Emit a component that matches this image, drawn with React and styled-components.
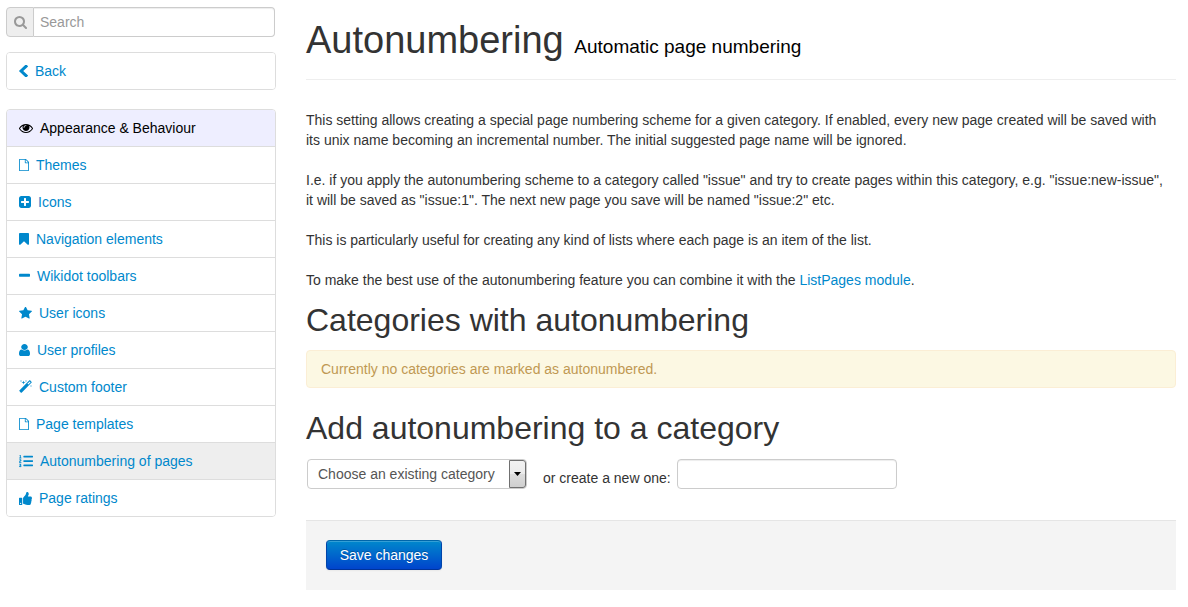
import React from "react";
import styled, { createGlobalStyle } from "styled-components";
import { FaListOl, FaThumbsUp } from "react-icons/fa";

const GlobalStyle = createGlobalStyle`
  *, *::before, *::after { box-sizing: border-box; }
  body {
    margin: 0;
    background: #fff;
    color: #333;
    font: 14px/20px "Liberation Sans", Arial, sans-serif;
  }
  a { color: #08c; text-decoration: none; }
  input, select, button { font: inherit; }
`;

const Page = styled.div`
  display: flex;
  gap: 30px;
  padding: 7px 12px 17px 6px;
`;

const Sidebar = styled.aside`
  flex: none;
  width: 270px;
`;

const SearchBox = styled.label`
  display: flex;
  height: 30px;
  margin: 0 1px 15px 0;
`;

const SearchAddon = styled.span`
  display: flex;
  align-items: center;
  justify-content: center;
  width: 28px;
  border: 1px solid #ccc;
  border-radius: 4px 0 0 4px;
  background: #eee;
  color: #999;
`;

const TextInput = styled.input`
  height: 30px;
  padding: 4px 6px;
  border: 1px solid #ccc;
  border-radius: 4px;
  background: #fff;
  color: #555;
  box-shadow: inset 0 1px 1px rgba(0, 0, 0, 0.075);
  &::placeholder { color: #999; }
`;

const SearchInput = styled(TextInput)`
  flex: 1;
  min-width: 0;
  border-left: 0;
  border-radius: 0 4px 4px 0;
`;

const NavList = styled.ul`
  list-style: none;
  margin: 0 0 19px;
  padding: 0;
  border: 1px solid #ddd;
  border-radius: 4px;
  overflow: hidden;
`;

const NavItem = styled.li`
  & + & { border-top: 1px solid #ddd; }
`;

const NavLink = styled.a`
  display: flex;
  align-items: center;
  gap: 7px;
  padding: 8px 12px;
  background: ${(p) => (p.$kind === "header" ? "#eef" : p.$kind === "active" ? "#eee" : "#fff")};
  && { color: ${(p) => (p.$kind === "header" ? "#000" : "#08c")}; }
`;

const Glyph = styled.svg`
  flex: none;
  display: block;
  fill: currentColor;
`;

const Main = styled.main`
  flex: 1;
  min-width: 0;
  padding-top: 13px;
`;

const PageHeader = styled.header`
  padding-bottom: 19px;
  margin-bottom: 30px;
  border-bottom: 1px solid #eee;
`;

const Title = styled.h1`
  margin: 0;
  font-size: 38px;
  line-height: 40px;
  font-weight: 400;
  small {
    font-size: 19px;
    line-height: 20px;
    color: #000;
  }
`;

const Paragraph = styled.p`
  margin: 0 0 20px;
`;

const SectionTitle = styled.h2`
  margin: ${(p) => (p.$first ? "10px" : "20px")} 0 10px;
  font-size: 32px;
  line-height: 40px;
  font-weight: 400;
`;

const Intro = styled.div`
  padding-right: 8px;
  p:last-child { margin-bottom: 10px; }
`;

const Alert = styled.div`
  padding: 8px 14px;
  border: 1px solid #fbeed5;
  border-radius: 4px;
  background: #fcf8e3;
  color: #c09853;
`;

const CategoryRow = styled.div`
  display: flex;
  align-items: flex-end;
  padding: 1px;
`;

const SelectWrap = styled.span`
  position: relative;
  display: block;
  width: 220px;
`;

const Select = styled.select`
  appearance: none;
  display: block;
  width: 100%;
  height: 30px;
  padding: 4px 20px 4px 10px;
  border: 1px solid #ccc;
  border-radius: 4px;
  background: #fff;
  color: #555;
`;

const SelectArrow = styled.span`
  position: absolute;
  top: 1px;
  right: 1px;
  bottom: 1px;
  width: 17px;
  display: flex;
  align-items: center;
  justify-content: center;
  border: 1px solid #707070;
  border-radius: 0 3px 3px 0;
  background: linear-gradient(#f2f2f2, #ebebeb 50%, #ddd 50%, #cfcfcf);
  color: #000;
  pointer-events: none;
`;

const NewLabel = styled.label`
  margin: 0 6px 0 16px;
  line-height: 22px;
`;

const NewInput = styled(TextInput)`
  width: 220px;
`;

const Actions = styled.div`
  margin-top: 30px;
  padding: 19px 20px 20px;
  border-top: 1px solid #e5e5e5;
  background: #f4f4f4;
`;

const PrimaryButton = styled.button`
  display: block;
  min-width: 116px;
  height: 30px;
  padding: 4px 12px;
  border: 1px solid;
  border-color: #06a #04a #039;
  border-radius: 4px;
  background: linear-gradient(#08c, #04c);
  color: #fff;
  text-shadow: 0 -1px 0 rgba(0, 0, 0, 0.25);
  box-shadow: inset 0 1px 0 rgba(255, 255, 255, 0.2), 0 1px 2px rgba(0, 0, 0, 0.05);
`;

/* Each glyph: [view box, drawn width, drawn height, path]. */
const glyphs = {
  search: ["64 128 1664 1664", 13, 13, "M1216 832q0-185-131.5-316.5t-316.5-131.5-316.5 131.5-131.5 316.5 131.5 316.5 316.5 131.5 316.5-131.5 131.5-316.5zm512 832q0 52-38 90t-90 38q-54 0-90-38l-343-342q-179 124-399 124-143 0-273.5-55.5t-225-150-150-225-55.5-273.5 55.5-273.5 150-225 225-150 273.5-55.5 273.5 55.5 225 150 150 225 55.5 273.5q0 220-124 399l343 343q37 37 37 90z"],
  back: ["410 90 1036 1484", 9, 12, "M1427 301l-531 531 531 531q19 19 19 45t-19 45l-166 166q-19 19-45 19t-45-19l-742-742q-19-19-19-45t19-45l742-742q19-19 45-19t45 19l166 166q19 19 19 45t-19 45z"],
  eye: ["0 0 1792 1792", 14, 14, "M1664 960q-152-236-381-353 61 104 61 225 0 185-131.5 316.5t-316.5 131.5-316.5-131.5-131.5-316.5q0-121 61-225-229 117-381 353 133 205 333.5 326.5t434.5 121.5 434.5-121.5 333.5-326.5zm-720-384q0-20-14-34t-34-14q-125 0-214.5 89.5t-89.5 214.5q0 20 14 34t34 14 34-14 14-34q0-86 61-147t147-61q20 0 34-14t14-34zm848 384q0 34-20 69-140 230-376.5 368.5t-499.5 138.5-499.5-139-376.5-368q-20-35-20-69t20-69q140-229 376.5-368t499.5-139 499.5 139 376.5 368q20 35 20 69z"],
  file: ["128 0 1536 1792", 10, 12, "M1596 380q28 28 48 76t20 88v1152q0 40-28 68t-68 28h-1344q-40 0-68-28t-28-68v-1600q0-40 28-68t68-28h896q40 0 88 20t76 48zm-444-244v376h376q-10-29-22-41l-313-313q-12-12-41-22zm384 1528v-1024h-416q-40 0-68-28t-28-68v-416h-768v1536h1280z"],
  plus: ["128 128 1536 1536", 12, 12, "M1408 960v-128q0-26-19-45t-45-19h-320v-320q0-26-19-45t-45-19h-128q-26 0-45 19t-19 45v320h-320q-26 0-45 19t-19 45v128q0 26 19 45t45 19h320v320q0 26 19 45t45 19h128q26 0 45-19t19-45v-320h320q26 0 45-19t19-45zm256-544v960q0 119-84.5 203.5t-203.5 84.5h-960q-119 0-203.5-84.5t-84.5-203.5v-960q0-119 84.5-203.5t203.5-84.5h960q119 0 203.5 84.5t84.5 203.5z"],
  bookmark: ["256 128 1280 1536", 10, 12, "M1420 128q23 0 44 9 33 13 52.5 41t19.5 62v1289q0 34-19.5 62t-52.5 41q-19 8-44 8-48 0-83-32l-441-424-441 424q-36 33-83 33-23 0-44-9-33-13-52.5-41t-19.5-62v-1289q0-34 19.5-62t52.5-41q21-9 44-9h1048z"],
  minus: ["192 0 1408 1792", 11, 14, "M1600 704v192q0 40-28 68t-68 28h-1216q-40 0-68-28t-28-68v-192q0-40 28-68t68-28h1216q40 0 68 28t28 68z"],
  star: ["64 96 1664 1587", 13, 12, "M1728 647q0 22-26 48l-363 354 86 500q1 7 1 20 0 21-10.5 35.5t-30.5 14.5q-19 0-40-12l-449-236-449 236q-22 12-40 12-21 0-31.5-14.5t-10.5-35.5q0-6 2-20l86-500-364-354q-25-27-25-48 0-37 56-46l502-73 225-455q19-41 49-41t49 41l225 455 502 73q56 9 56 46z"],
  user: ["256 128 1280 1536", 11, 12, "M1536 1399q0 109-62.5 187t-150.5 78h-854q-88 0-150.5-78t-62.5-187q0-85 8.5-160.5t31.5-152 58.5-131 94-89 134.5-34.5q131 128 313 128t313-128q76 0 134.5 34.5t94 89 58.5 131 31.5 152 8.5 160.5zm-256-887q0 159-112.5 271.5t-271.5 112.5-271.5-112.5-112.5-271.5 112.5-271.5 271.5-112.5 271.5 112.5 112.5 271.5z"],
  magic: ["64 0 1664 1792", 13, 14, "M1254 581l293-293-107-107-293 293zm447-293q0 27-18 45l-1286 1286q-18 18-45 18t-45-18l-198-198q-18-18-18-45t18-45l1286-1286q18-18 45-18t45 18l198 198q18 18 18 45zm-1351-190l98 30-98 30-30 98-30-98-98-30 98-30 30-98zm350 162l196 60-196 60-60 196-60-196-196-60 196-60 60-196zm930 478l98 30-98 30-30 98-30-98-98-30 98-30 30-98zm-640-640l98 30-98 30-30 98-30-98-98-30 98-30 30-98z"],
};

function Icon({ name }) {
  if (name === "list") return <Glyph as={FaListOl} size={14} aria-hidden="true" />;
  if (name === "thumb") return <Glyph as={FaThumbsUp} size={13} aria-hidden="true" />;
  const [viewBox, width, height, d] = glyphs[name];
  return (
    <Glyph viewBox={viewBox} width={width} height={height} preserveAspectRatio="none" aria-hidden="true">
      <path d={d} />
    </Glyph>
  );
}

const menu = [
  { icon: "eye", text: "Appearance & Behaviour", kind: "header" },
  { icon: "file", text: "Themes" },
  { icon: "plus", text: "Icons" },
  { icon: "bookmark", text: "Navigation elements" },
  { icon: "minus", text: "Wikidot toolbars" },
  { icon: "star", text: "User icons" },
  { icon: "user", text: "User profiles" },
  { icon: "magic", text: "Custom footer" },
  { icon: "file", text: "Page templates" },
  { icon: "list", text: "Autonumbering of pages", kind: "active" },
  { icon: "thumb", text: "Page ratings" },
];

function Menu({ items }) {
  return (
    <NavList>
      {items.map((item) => (
        <NavItem key={item.text}>
          <NavLink href="#" $kind={item.kind} aria-current={item.kind === "active" ? "page" : undefined}>
            <Icon name={item.icon} />
            {item.text}
          </NavLink>
        </NavItem>
      ))}
    </NavList>
  );
}

export default function App() {
  return (
    <>
      <GlobalStyle />
      <Page>
        <Sidebar>
          <SearchBox>
            <SearchAddon><Icon name="search" /></SearchAddon>
            <SearchInput type="text" placeholder="Search" aria-label="Search" />
          </SearchBox>
          <nav>
            <Menu items={[{ icon: "back", text: "Back" }]} />
            <Menu items={menu} />
          </nav>
        </Sidebar>
        <Main>
          <PageHeader>
            <Title>Autonumbering <small>Automatic page numbering</small></Title>
          </PageHeader>
          <Intro>
            <Paragraph>
              This setting allows creating a special page numbering scheme for a given category. If enabled, every new
              page created will be saved with its unix name becoming an incremental number. The initial suggested page
              name will be ignored.
            </Paragraph>
            <Paragraph>
              I.e. if you apply the autonumbering scheme to a category called "issue" and try to create pages within
              this category, e.g. "issue:new-issue", it will be saved as "issue:1". The next new page you save will be
              named "issue:2" etc.
            </Paragraph>
            <Paragraph>
              This is particularly useful for creating any kind of lists where each page is an item of the list.
            </Paragraph>
            <Paragraph>
              To make the best use of the autonumbering feature you can combine it with the{" "}
              <a href="#">ListPages module</a>.
            </Paragraph>
          </Intro>
          <SectionTitle $first>Categories with autonumbering</SectionTitle>
          <Alert>Currently no categories are marked as autonumbered.</Alert>
          <SectionTitle>Add autonumbering to a category</SectionTitle>
          <form onSubmit={(e) => e.preventDefault()}>
            <CategoryRow>
              <SelectWrap>
                <Select aria-label="Existing category" defaultValue="">
                  <option value="">Choose an existing category</option>
                </Select>
                <SelectArrow>
                  <Glyph viewBox="0 0 7 4" width={7} height={4} aria-hidden="true"><path d="M0 0h7L3.5 4z" /></Glyph>
                </SelectArrow>
              </SelectWrap>
              <NewLabel htmlFor="new-category">or create a new one:</NewLabel>
              <NewInput id="new-category" type="text" />
            </CategoryRow>
            <Actions>
              <PrimaryButton type="submit">Save changes</PrimaryButton>
            </Actions>
          </form>
        </Main>
      </Page>
    </>
  );
}
